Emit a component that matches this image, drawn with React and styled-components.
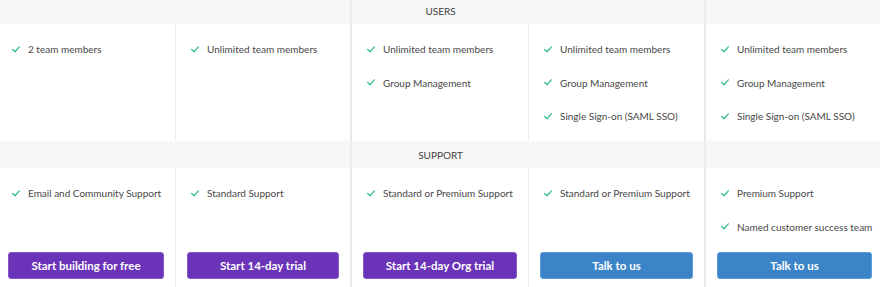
import React from 'react'
import styled, { createGlobalStyle } from 'styled-components'

const GlobalStyle = createGlobalStyle`
    html, body {
        margin: 0;
        padding: 0;
        background: #ffffff;
        overflow: hidden;
    }
    body {
        font-family: Lato, "Noto Sans", sans-serif;
        color: #474747;
    }
`

// the screenshot is cut a few pixels into the table on top and left
const Page = styled.div`
    width: 886px;
    margin: -3px 0 0 -3px;
`

const Row = styled.div`
    display: grid;
    grid-template-columns: 179px 176px 177px 177px 177px;
`

const HeaderRow = styled(Row)`
    height: 27px;
    background: #f7f7f7;
`

const HeaderCell = styled.div`
    display: flex;
    align-items: center;
    justify-content: center;
    font-size: 10px;
    text-transform: uppercase;
    color: #3f3f3f;
    border-right: ${p => (p.$groupEnd ? '2px solid #ededed' : 'none')};
`

const Cell = styled.div`
    display: flex;
    flex-direction: column;
    padding: 15px 11px ${p => (p.$tail ? '8px' : '15px')} 11px;
    border-right: ${p => (p.$groupEnd ? '2px solid #e9e9e9' : '1px solid #f0f0f0')};
    &:last-child {
        border-right: none;
    }
`

const List = styled.ul`
    list-style: none;
    margin: 0;
    padding: 0 0 0 4px;
    display: flex;
    flex-direction: column;
    gap: 13.5px;
`

const Item = styled.li`
    display: flex;
    align-items: center;
    gap: 8px;
    font-size: 10px;
    line-height: 20px;
    color: #474747;
    white-space: nowrap;
    svg {
        flex: none;
    }
`

const Button = styled.button`
    margin-top: auto;
    height: 27px;
    width: 100%;
    border-radius: 3px;
    border: 1px solid ${p => (p.$variant === 'blue' ? '#5a9bd8' : '#8456c8')};
    background: ${p => (p.$variant === 'blue' ? '#3b84c8' : '#6a33b8')};
    color: #ffffff;
    font-family: Lato, "Noto Sans", sans-serif;
    font-weight: 700;
    font-size: 11.5px;
    cursor: pointer;
`

const SupportBody = styled(Row)`
    & > div > ul {
        margin-bottom: 15px;
    }
`

const Check = () => (
    <svg width="8" height="7" viewBox="0 0 8 7">
        <path d="M0.7 3.6 L3 5.8 L7.3 0.9" fill="none" stroke="#3fbf8b" strokeWidth="1.4" strokeLinecap="round" strokeLinejoin="round" />
    </svg>
)

const groupEnds = [false, true, false, true, false]

const users = [
    ['2 team members'],
    ['Unlimited team members'],
    ['Unlimited team members', 'Group Management'],
    ['Unlimited team members', 'Group Management', 'Single Sign-on (SAML SSO)'],
    ['Unlimited team members', 'Group Management', 'Single Sign-on (SAML SSO)'],
]

const support = [
    { items: ['Email and Community Support'], cta: 'Start building for free', variant: 'purple' },
    { items: ['Standard Support'], cta: 'Start 14-day trial', variant: 'purple' },
    { items: ['Standard or Premium Support'], cta: 'Start 14-day Org trial', variant: 'purple' },
    { items: ['Standard or Premium Support'], cta: 'Talk to us', variant: 'blue' },
    { items: ['Premium Support', 'Named customer success team'], cta: 'Talk to us', variant: 'blue' },
]

function SectionHeader({ title }) {
    return (
        <HeaderRow>
            {groupEnds.map((end, i) => (
                <HeaderCell key={i} $groupEnd={end}>
                    {i === 2 ? title : null}
                </HeaderCell>
            ))}
        </HeaderRow>
    )
}

function Features({ items }) {
    return (
        <List>
            {items.map(text => (
                <Item key={text}>
                    <Check />
                    {text}
                </Item>
            ))}
        </List>
    )
}

export default function App() {
    return (
        <Page>
            <GlobalStyle />
            <SectionHeader title="Users" />
            <Row>
                {users.map((items, i) => (
                    <Cell key={i} $groupEnd={groupEnds[i]}>
                        <Features items={items} />
                    </Cell>
                ))}
            </Row>
            <SectionHeader title="Support" />
            <SupportBody>
                {support.map((plan, i) => (
                    <Cell key={i} $groupEnd={groupEnds[i]} $tail>
                        <Features items={plan.items} />
                        <Button $variant={plan.variant}>{plan.cta}</Button>
                    </Cell>
                ))}
            </SupportBody>
        </Page>
    )
}
